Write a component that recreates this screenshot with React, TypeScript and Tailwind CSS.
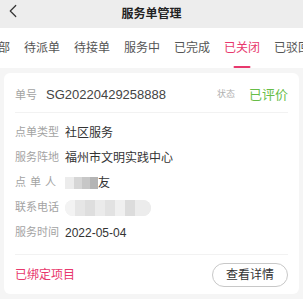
import { ChevronLeft } from 'lucide-react'

const TABS = ['全部', '待派单', '待接单', '服务中', '已完成', '已关闭', '已驳回', '已取消']

function Row({ label, children, spaced }: { label: string; children: React.ReactNode; spaced?: boolean }) {
  return (
    <div className="flex h-[25px] items-center">
      <span
        className={`w-[44px] shrink-0 whitespace-nowrap text-[11px] text-[#a3a3a3] ${spaced ? 'tracking-[4px]' : ''}`}
      >
        {label}
      </span>
      <div className="ml-[6px] flex items-center text-[12px] text-[#333]">{children}</div>
    </div>
  )
}

export default function App() {
  return (
    <div
      className="h-[299px] w-[303px] overflow-hidden bg-[#f5f5f5]"
      style={{ fontFamily: '"Liberation Sans", "Noto Sans CJK SC", sans-serif' }}
    >
      <div className="relative flex h-[28px] items-center justify-center bg-[#ededed]">
        <ChevronLeft className="absolute left-[2px] top-[0px] h-[22px] w-[22px] text-[#333]" strokeWidth={1.3} />
        <span className="text-[12px] font-bold text-[#222]">服务单管理</span>
      </div>

      <div className="flex h-[40px] items-center overflow-hidden whitespace-nowrap bg-white">
        <div className="ml-[-21px] flex">
          {TABS.map((t) => (
            <div key={t} className="relative flex h-[40px] items-center px-[7px]">
              <span className={`text-[12px] ${t === '已关闭' ? 'text-[#e8386d]' : 'text-[#555]'}`}>{t}</span>
              {t === '已关闭' && (
                <span className="absolute bottom-[0px] left-1/2 h-[2px] w-[17px] -translate-x-1/2 rounded-full bg-[#e8386d]" />
              )}
            </div>
          ))}
        </div>
      </div>

      <div className="mx-[4px] mt-[5px] rounded-[6px] bg-white px-[11px] pb-[7px] pt-[13px]">
        <div className="flex h-[18px] items-center justify-between">
          <div className="flex items-center">
            <span className="text-[11px] text-[#a3a3a3]">单号</span>
            <span className="ml-[9px] text-[13px] text-[#444]">SG20220429258888</span>
          </div>
          <div className="flex items-center">
            <span className="text-[9px] text-[#b0b0b0]">状态</span>
            <span className="ml-[14px] text-[13px] text-[#67bd48]">已评价</span>
          </div>
        </div>
        <div className="mt-[8px] h-px bg-[#f2f2f2]" />

        <div className="pt-[7px]">
          <Row label="点单类型">社区服务</Row>
          <Row label="服务阵地">福州市文明实践中心</Row>
          <Row label="点单人" spaced>
            <div className="flex items-center">
              <div className="flex blur-[0.6px]">
                <span className="h-[12px] w-[9px] bg-[#ececec]" />
                <span className="h-[12px] w-[8px] bg-[#d6d6d6]" />
                <span className="h-[12px] w-[8px] bg-[#c7c7c7]" />
                <span className="h-[12px] w-[8px] bg-[#b4b4b4]" />
              </div>
              <span className="text-[12px] text-[#333]">友</span>
            </div>
          </Row>
          <Row label="联系电话">
            <div className="flex h-[16px] w-[86px] overflow-hidden rounded-full bg-[#eeeeee] blur-[0.5px]">
              <span className="w-[10px] bg-[#f3f3f3]" />
              <span className="w-[10px] bg-[#e6e6e6]" />
              <span className="w-[10px] bg-[#dedede]" />
              <span className="w-[10px] bg-[#ebebeb]" />
              <span className="w-[10px] bg-[#e2e2e2]" />
              <span className="w-[10px] bg-[#f0f0f0]" />
              <span className="w-[10px] bg-[#dcdcdc]" />
              <span className="w-[16px] bg-[#ececec]" />
            </div>
          </Row>
          <Row label="服务时间">2022-05-04</Row>
        </div>

        <div className="mt-[9px] h-px bg-[#f2f2f2]" />

        <div className="flex items-center justify-between pt-[8px]">
          <span className="text-[12px] text-[#e8386d]">已绑定项目</span>
          <button className="flex h-[24px] w-[76px] items-center justify-center rounded-full border border-[#c8c8c8] text-[12px] text-[#333]">
            查看详情
          </button>
        </div>
      </div>
    </div>
  )
}
